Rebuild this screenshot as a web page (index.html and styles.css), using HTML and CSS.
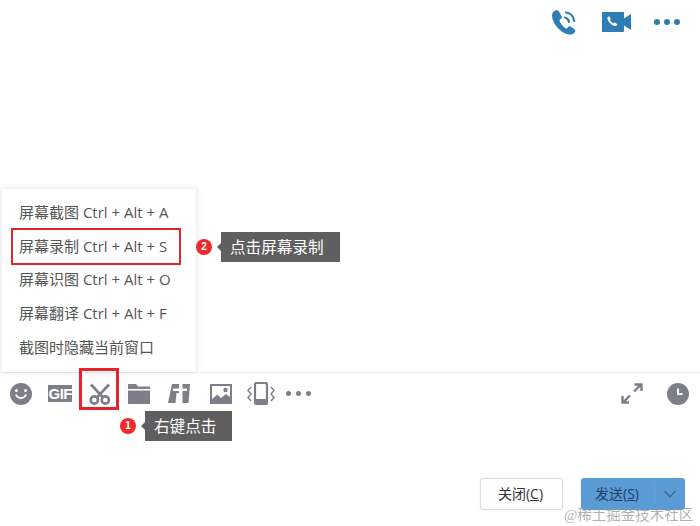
FILE: index.html
```html
<!DOCTYPE html>
<html lang="zh-CN">
<head>
    <meta charset="UTF-8">
    <title>屏幕录制</title>
    <link rel="stylesheet" href="styles.css">
</head>
<body>
<div class="chat">
    <div class="topbar">
        <svg class="top-icon" width="28" height="28" viewBox="0 0 28 28">
            <path class="blue" d="M4.500 2.500C2.500 3.300 1 5 1 7.500c0 4 2.300 8.800 5.800 12.500 3.400 3.600 7.800 6.500 12 6.500 2.200 0 4-1 5.200-2.600.6-.8.4-1.700-.3-2.300l-4-3c-.8-.5-1.600-.4-2.200.2l-1.500 1.500c-.4.400-1 .4-1.500.1-2.600-1.900-4.700-4.500-6-7.300-.2-.5-.1-1 .3-1.400l1.500-1.300c.6-.6.8-1.400.4-2.100L8 3.400C7.500 2.500 5.500 2.100 4.500 2.500z"/>
            <path class="blue-line" d="M14 9.500c2 .4 3.500 2 4 4.500M15 4.500c4.300.6 7.500 3.900 8.200 8.500"/>
        </svg>
        <svg class="top-icon" width="30" height="20" viewBox="0 0 30 20">
            <path class="blue" d="M1 0h20c.6 0 1 .4 1 1v5.500l7-4.500v16l-7-4.500V19c0 .6-.4 1-1 1H1c-.6 0-1-.4-1-1V1c0-.6.4-1 1-1z"/>
            <path class="white" d="M6.500 4.500c-.9.4-1.300 1.300-1 2.500.9 3.300 3.600 6 7 7 1.200.3 2.200-.1 2.700-1 .2-.4.100-.8-.2-1l-2-1.400c-.4-.2-.7-.2-1 .1l-.7.7c-1.500-.7-2.700-2-3.400-3.400l.7-.7c.3-.3.3-.7.1-1L7.500 4.700c-.2-.3-.6-.4-1-.2z"/>
        </svg>
        <div class="dots dots-blue"><i></i><i></i><i></i></div>
    </div>

    <div class="messages"></div>

    <div class="toolbar">
        <div class="tool">
            <svg width="22" height="22" viewBox="0 0 22 22">
                <circle class="gray" cx="11" cy="11" r="11"/>
                <circle class="white" cx="6.500" cy="7.500" r="1.500"/>
                <circle class="white" cx="15.500" cy="7.500" r="1.500"/>
                <path class="white-line" d="M6 11.500c1 2.500 3 3.500 5 3.500s4-1 5-3.500"/>
            </svg>
        </div>
        <div class="tool">
            <span class="gif">GIF</span>
        </div>
        <div class="tool">
            <svg width="24" height="24" viewBox="0 0 24 24">
                <path class="gray-thick" d="M3 2.500 15 15.500M21 2.500 9 15.500"/>
                <circle class="gray-thick" cx="6.300" cy="18" r="3.600"/>
                <circle class="gray-thick" cx="17.300" cy="18" r="3.600"/>
            </svg>
        </div>
        <div class="tool tool-narrow">
            <svg width="22" height="20" viewBox="0 0 22 20">
                <path class="gray" d="M0 1c0-.6.4-1 1-1h7l2 2.500h11c.6 0 1 .4 1 1V5H0zM0 6.500h22V19c0 .6-.4 1-1 1H1c-.6 0-1-.4-1-1z"/>
            </svg>
        </div>
        <div class="tool tool-wide">
            <svg width="22" height="20" viewBox="0 0 22 20">
                <path class="gray" d="M4 0H22L20.500 19H2L0 19z"/>
                <path class="white" d="M11 0h3.500v4.500H19v2.500h-4.500v12H11V7H5V4.500h6z"/>
                <path class="white" d="M7.500 19 8.500 9H11v10z"/>
            </svg>
        </div>
        <div class="tool tool-wide">
            <svg width="22" height="20" viewBox="0 0 22 20">
                <path class="gray" d="M0 0h22v20H0z"/>
                <path class="white" d="M2 2h18v11l-4-3-5 4-3.500-3.500L2 15z"/>
                <circle class="gray" cx="15.500" cy="6" r="2.200"/>
            </svg>
        </div>
        <div class="tool tool-narrow">
            <svg width="30" height="24" viewBox="0 0 30 24">
                <rect class="gray-ring" x="9" y="1" width="12" height="21" rx="1.500"/>
                <rect class="gray" x="9" y="17" width="12" height="5"/>
                <path class="gray-thin" d="M5 5 2 8.500 5 12 2 15.500 5 19M25 5l3 3.500-3 3.500 3 3.500-3 3.500"/>
            </svg>
        </div>
        <div class="tool tool-narrow">
            <div class="dots dots-gray"><i></i><i></i><i></i></div>
        </div>
        <div class="tool-right">
            <svg width="22" height="21" viewBox="0 0 22 21">
                <path class="gray-line" d="M13 8.500 20 1.500M13.500 1.500H20.500V8M9 12.500 2 19.500M1.500 13V19.500H8"/>
            </svg>
            <svg width="22" height="22" viewBox="0 0 22 22">
                <circle class="gray" cx="11" cy="11" r="11"/>
                <path class="white-line" d="M11 5.500v5.500h4.500"/>
            </svg>
        </div>
    </div>

    <div class="input-area">
        <button class="btn btn-close">关闭(<u>C</u>)</button>
        <div class="btn btn-send">
            <span class="send-label">发送(<u>S</u>)</span>
            <span class="send-arrow">
                <svg width="14" height="8" viewBox="0 0 14 8"><path class="dark-line" d="M1.500 1 7 6.500 12.500 1"/></svg>
            </span>
        </div>
    </div>

    <!-- popup menu sits over the message area -->
    <div class="menu">
        <div class="menu-item">屏幕截图 Ctrl + Alt + A</div>
        <div class="menu-item active">屏幕录制 Ctrl + Alt + S</div>
        <div class="menu-item">屏幕识图 Ctrl + Alt + O</div>
        <div class="menu-item">屏幕翻译 Ctrl + Alt + F</div>
        <div class="menu-item">截图时隐藏当前窗口</div>
    </div>

    <div class="scissor-mark"></div>

    <div class="callout callout-one">
        <span class="badge">1</span>
        <span class="tip">右键点击</span>
    </div>
    <div class="callout callout-two">
        <span class="badge">2</span>
        <span class="tip">点击屏幕录制</span>
    </div>

    <div class="watermark">@稀土掘金技术社区</div>
</div>
</body>
</html>
```

FILE: styles.css
```css
* {
    box-sizing: border-box;
}
body {
    margin: 0;
    background-color: #fff;
    font-family: "Open Sans", "Noto Sans CJK SC", sans-serif;
    color: #444;
}
.chat {
    position: relative;
    width: 700px;
    height: 526px;
    display: flex;
    flex-direction: column;
    overflow: hidden;
}

/* svg paint helpers */
.blue { fill: #2f7db5; }
.white { fill: #fff; }
.gray { fill: #7e7e8a; }
.blue-line { fill: none; stroke: #2f7db5; stroke-width: 2.2; stroke-linecap: round; }
.white-line { fill: none; stroke: #fff; stroke-width: 2; }
.gray-line { fill: none; stroke: #7e7e8a; stroke-width: 2.4; }
.gray-thick { fill: none; stroke: #7e7e8a; stroke-width: 2.6; }
.gray-ring { fill: none; stroke: #7e7e8a; stroke-width: 2.2; }
.gray-thin { fill: none; stroke: #7e7e8a; stroke-width: 1.4; }
.dark-line { fill: none; stroke: #4a6f94; stroke-width: 1.6; }

.topbar {
    height: 45px;
    display: flex;
    align-items: center;
    justify-content: flex-end;
    padding: 0 20px 2px 0;
    gap: 22px;
}
.top-icon:first-child {
    margin-right: 1px;
}
.dots {
    display: flex;
}
.dots i {
    display: block;
    border-radius: 50%;
}
.dots-blue {
    gap: 4px;
}
.dots-blue i {
    width: 6px;
    height: 6px;
    background-color: #2f7db5;
}
.dots-gray {
    gap: 5px;
}
.dots-gray i {
    width: 5px;
    height: 5px;
    background-color: #7e7e8a;
}

.messages {
    height: 327px;
}

.toolbar {
    height: 42px;
    display: flex;
    align-items: center;
    border-top: 1px solid #f1f1f1;
}
.tool {
    width: 39.5px;
    display: flex;
    justify-content: center;
    flex-shrink: 0;
}
.tool:first-child {
    margin-left: 1px;
}
.tool-narrow {
    width: 38px;
}
.tool-wide {
    width: 42px;
}
.gif {
    width: 24px;
    height: 17px;
    background-color: #7e7e8a;
    color: #fff;
    font-family: "Liberation Sans", sans-serif;
    font-size: 15px;
    font-weight: bold;
    letter-spacing: -0.5px;
    line-height: 17px;
    text-align: center;
}
.tool-right {
    margin-left: auto;
    display: flex;
    align-items: center;
    gap: 24px;
    padding-right: 11px;
}

.input-area {
    flex: 1;
    display: flex;
    justify-content: flex-end;
    align-items: flex-start;
    gap: 18px;
    padding: 64px 15px 0 0;
}
.btn {
    height: 32px;
    border-radius: 3px;
    font-family: inherit;
    font-size: 14px;
    line-height: 30px;
    color: #333;
}
.btn-close {
    width: 83px;
    padding: 0 2px 2px 0;
    background-color: #fff;
    border: 1px solid #ddd;
    box-shadow: 0 0 2px rgba(0,0,0,0.08);
}
.btn-send {
    width: 104px;
    display: flex;
    align-items: center;
    background-color: #5b9bd5;
    color: #1d3f66;
}
.send-label {
    width: 73px;
    padding-left: 14px;
}
.send-arrow {
    flex: 1;
    height: 20px;
    display: flex;
    align-items: center;
    justify-content: center;
    border-left: 1px solid #65a2da;
}

.menu {
    position: absolute;
    left: 2px;
    top: 189px;
    width: 194px;
    height: 183px;
    padding-top: 7px;
    background-color: #fff;
    box-shadow: 0 0 6px rgba(0,0,0,0.14);
}
.menu-item {
    height: 33.700px;
    line-height: 33.700px;
    margin: 0 17px 0 11px;
    padding-left: 6px;
    font-size: 15px;
    color: #555;
    white-space: nowrap;
}
.menu-item.active {
    outline: 2.500px solid #e4252b;
    outline-offset: 0.500px;
}

.scissor-mark {
    position: absolute;
    left: 79px;
    top: 368px;
    width: 40px;
    height: 42px;
    border: 3px solid #e4252b;
}

.callout {
    position: absolute;
    display: flex;
    align-items: center;
    gap: 9px;
}
.callout-one {
    left: 120px;
    top: 411px;
}
.callout-two {
    left: 196px;
    top: 232px;
}
.badge {
    width: 16px;
    height: 16px;
    border-radius: 50%;
    background-color: #ee2a2e;
    color: #fff;
    font-family: "Liberation Sans", sans-serif;
    font-size: 10px;
    font-weight: bold;
    line-height: 16px;
    text-align: center;
}
.tip {
    position: relative;
    height: 30px;
    padding: 0 16px 0 9px;
    background-color: #5f5f5f;
    color: #fff;
    font-size: 15.600px;
    line-height: 30px;
    white-space: nowrap;
}
.tip::before {
    content: "";
    position: absolute;
    left: -4px;
    top: 11px;
    border-style: solid;
    border-width: 4px 4px 4px 0;
    border-color: transparent #5f5f5f transparent transparent;
}

.watermark {
    position: absolute;
    left: 564px;
    top: 503px;
    font-family: "Liberation Serif", "Noto Sans CJK SC", serif;
    font-size: 14.500px;
    color: rgba(150, 150, 150, 0.75);
    white-space: nowrap;
}
```
